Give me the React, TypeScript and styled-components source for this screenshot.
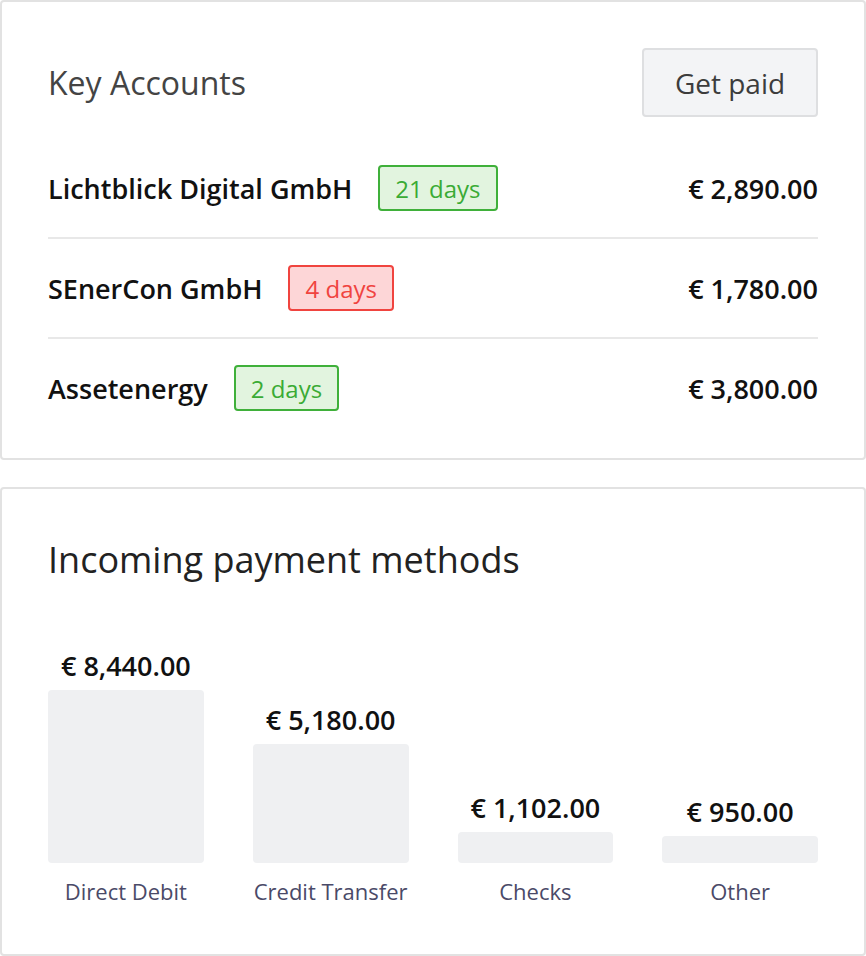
import React from 'react';
import styled, { createGlobalStyle } from 'styled-components';

const GlobalStyle = createGlobalStyle`
  body {
    margin: 0;
    background: #fff;
    font-family: "Open Sans", "Noto Sans", sans-serif;
    color: #111;
  }
`;

const Page = styled.div`
  width: 866px;
  display: flex;
  flex-direction: column;
  gap: 27px;
`;

const Card = styled.section`
  box-sizing: border-box;
  width: 866px;
  border: 2px solid #e2e2e2;
  border-radius: 4px;
  background: #fff;
`;

const AccountsCard = styled(Card)`
  padding: 46px 46px 21px 46px;
`;

const Header = styled.div`
  display: flex;
  align-items: center;
  justify-content: space-between;
  margin-bottom: 22px;
`;

const CardTitle = styled.h2`
  margin: 0;
  font-size: 32px;
  font-weight: 400;
  color: #444;
  line-height: 40px;
`;

const Button = styled.button`
  box-sizing: border-box;
  width: 176px;
  height: 69px;
  padding: 0;
  font-family: inherit;
  font-size: 28px;
  color: #3c3c3c;
  background: #f3f4f6;
  border: 2px solid #dedfe1;
  border-radius: 4px;
`;

const Row = styled.div`
  height: 98px;
  display: flex;
  align-items: center;
  & + & {
    border-top: 2px solid #e8e8e8;
  }
`;

const Name = styled.div`
  font-size: 27px;
  font-weight: 600;
  color: #111;
`;

const Badge = styled.span<{ $tone: 'ok' | 'late' }>`
  box-sizing: border-box;
  height: 46px;
  display: inline-flex;
  align-items: center;
  margin-left: 26px;
  padding: 0 15px;
  font-size: 24px;
  border-radius: 4px;
  border: 2px solid ${({ $tone }) => ($tone === 'ok' ? '#3fb03a' : '#f0443f')};
  background: ${({ $tone }) => ($tone === 'ok' ? '#e2f4df' : '#fdd6d7')};
  color: ${({ $tone }) => ($tone === 'ok' ? '#3aab35' : '#f0443f')};
`;

const Amount = styled.div`
  margin-left: auto;
  font-size: 27px;
  font-weight: 600;
  color: #111;
`;

const MethodsCard = styled(Card)`
  padding: 48px 46px 48px 46px;
`;

const BigTitle = styled.h2`
  margin: 0 0 67px 0;
  font-size: 36px;
  font-weight: 400;
  line-height: 46px;
  color: #222;
`;

const Chart = styled.div`
  display: grid;
  grid-template-columns: repeat(4, 1fr);
  column-gap: 49px;
  align-items: end;
`;

const Column = styled.div`
  display: flex;
  flex-direction: column;
  align-items: center;
`;

const BarValue = styled.div`
  font-size: 27px;
  font-weight: 600;
  line-height: 32px;
  color: #111;
  margin-bottom: 8px;
  white-space: nowrap;
`;

const Bar = styled.div`
  width: 100%;
  background: #eff0f2;
  border-radius: 4px;
`;

const BarLabel = styled.div`
  margin-top: 13px;
  font-size: 22px;
  line-height: 30px;
  color: #4a4a68;
  white-space: nowrap;
`;

const accounts = [
  { name: 'Lichtblick Digital GmbH', days: '21 days', tone: 'ok' as const, amount: '€ 2,890.00' },
  { name: 'SEnerCon GmbH', days: '4 days', tone: 'late' as const, amount: '€ 1,780.00' },
  { name: 'Assetenergy', days: '2 days', tone: 'ok' as const, amount: '€ 3,800.00' },
];

const methods = [
  { label: 'Direct Debit', value: '€ 8,440.00', height: 173 },
  { label: 'Credit Transfer', value: '€ 5,180.00', height: 119 },
  { label: 'Checks', value: '€ 1,102.00', height: 31 },
  { label: 'Other', value: '€ 950.00', height: 27 },
];

export default function App() {
  return (
    <>
      <GlobalStyle />
      <Page>
        <AccountsCard>
          <Header>
            <CardTitle>Key Accounts</CardTitle>
            <Button>Get paid</Button>
          </Header>
          {accounts.map((a) => (
            <Row key={a.name}>
              <Name>{a.name}</Name>
              <Badge $tone={a.tone}>{a.days}</Badge>
              <Amount>{a.amount}</Amount>
            </Row>
          ))}
        </AccountsCard>
        <MethodsCard>
          <BigTitle>Incoming payment methods</BigTitle>
          <Chart>
            {methods.map((m) => (
              <Column key={m.label}>
                <BarValue>{m.value}</BarValue>
                <Bar style={{ height: m.height }} />
                <BarLabel>{m.label}</BarLabel>
              </Column>
            ))}
          </Chart>
        </MethodsCard>
      </Page>
    </>
  );
}
